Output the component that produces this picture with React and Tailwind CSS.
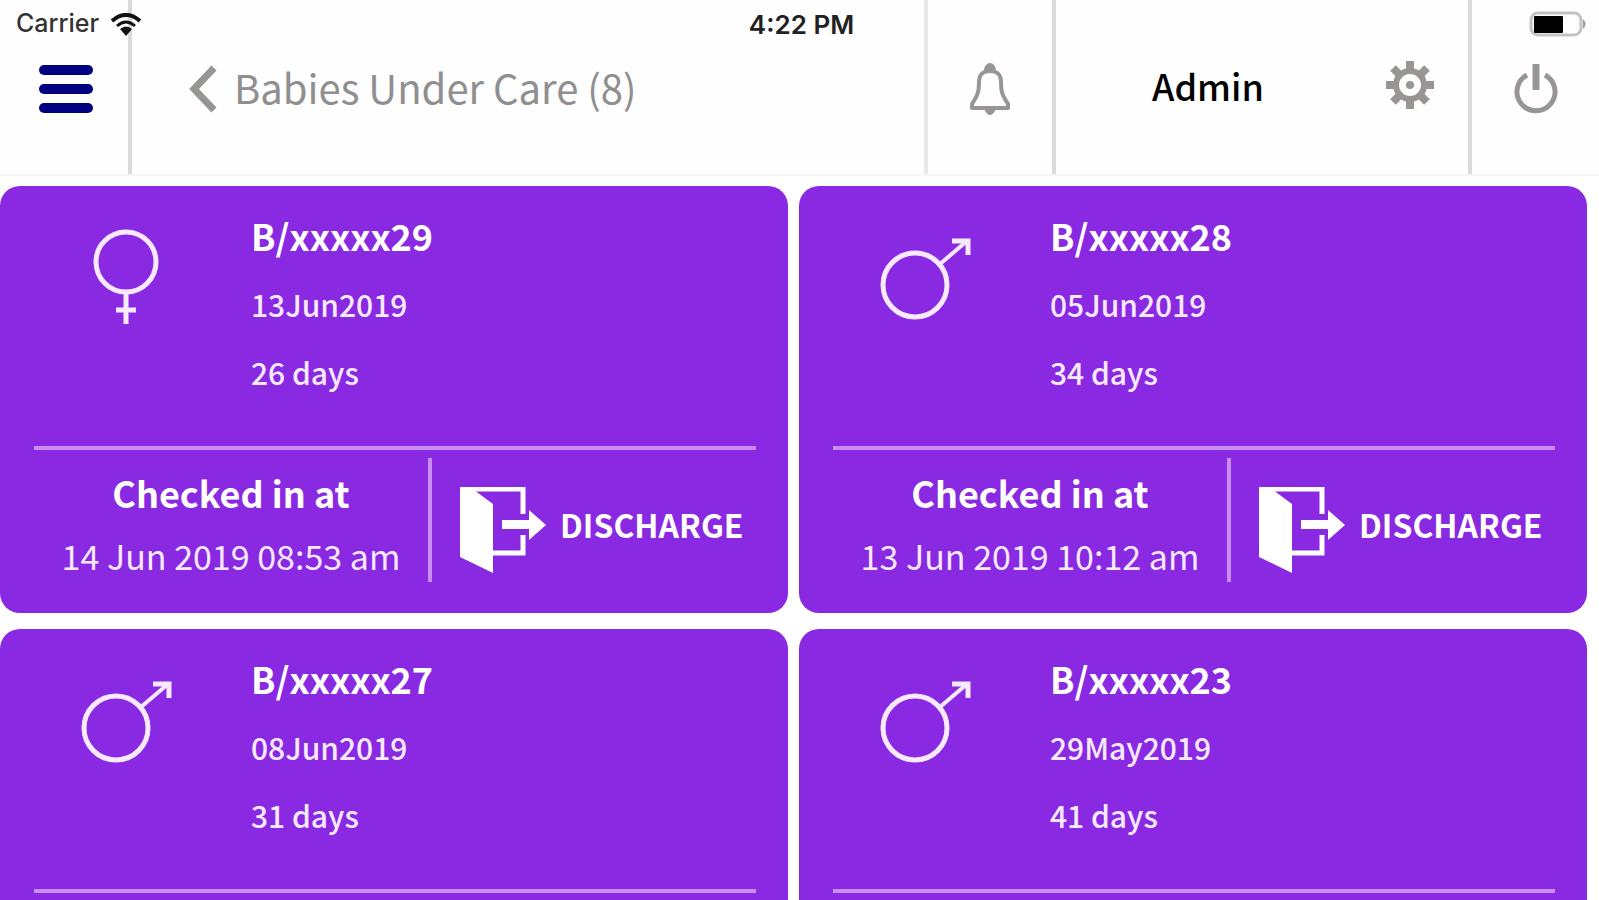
import React from 'react';

const babies = [
  { id: 'B/xxxxx29', sex: 'female', born: '13Jun2019', age: '26 days', checkedIn: '14 Jun 2019 08:53 am' },
  { id: 'B/xxxxx28', sex: 'male', born: '05Jun2019', age: '34 days', checkedIn: '13 Jun 2019 10:12 am' },
  { id: 'B/xxxxx27', sex: 'male', born: '08Jun2019', age: '31 days' },
  { id: 'B/xxxxx23', sex: 'male', born: '29May2019', age: '41 days' },
];

const FemaleIcon = () => (
  <svg viewBox="0 0 96 104" className="w-24 h-[104px]" fill="none" stroke="#f7e9ff" strokeWidth="5" aria-label="Female">
    <circle cx="48" cy="36" r="30" />
    <path d="M48 66v32M38 84h20" />
  </svg>
);

const MaleIcon = () => (
  <svg viewBox="0 0 96 104" className="w-24 h-[104px]" fill="none" stroke="#f7e9ff" strokeWidth="5" aria-label="Male">
    <circle cx="38" cy="59" r="32" />
    <path d="M63 38L90 15" strokeWidth="4" />
    <path d="M75 15h16v14" />
  </svg>
);

const DoorIcon = () => (
  <svg viewBox="0 0 86 86" className="w-[86px] h-[86px] shrink-0" fill="#fff" aria-hidden="true">
    <path d="M0 0H10L33 17V86L0 70Z" />
    <path d="M2 2H63V27M63 48V66H33" fill="none" stroke="#fff" strokeWidth="5" />
    <path d="M42 33H69V23L86 38L69 53V42H42Z" />
  </svg>
);

const WifiIcon = () => (
  <svg viewBox="0 0 30 23" className="w-[30px] h-[23px]" fill="none" stroke="#111" strokeWidth="4" aria-hidden="true">
    <path d="M1 8Q15 -4 29 8" />
    <path d="M6 13Q15 5 24 13" strokeWidth="3" />
    <path d="M9 16Q15 11 21 16L15 23Z" fill="#111" stroke="none" />
  </svg>
);

const BatteryIcon = () => (
  <svg viewBox="0 0 58 26" className="w-[58px] h-[26px]" aria-hidden="true">
    <rect x="2" y="2" width="50" height="22" rx="7" fill="#fff" stroke="#c4c4c4" strokeWidth="3" />
    <path d="M54 8q5 5 0 10z" fill="#999" />
    <rect x="5" y="5" width="29" height="17" rx="1" fill="#000" />
  </svg>
);

const BellIcon = () => (
  <svg viewBox="0 0 42 54" className="w-[42px] h-[54px]" fill="none" stroke="#999595" strokeWidth="4" strokeLinejoin="round" aria-hidden="true">
    <path d="M21 9C12 9 10 14 10 21C10 31 8 34 3 42V46H39V42C34 34 32 31 32 21C32 14 30 9 21 9Z" />
    <path d="M15 9a6 8 0 0 1 12 0zM15 47q6 12 12 0z" fill="#999595" stroke="none" />
  </svg>
);

const GearIcon = () => (
  <svg viewBox="-24 -24 48 48" className="w-12 h-12" fill="none" stroke="#999595" aria-hidden="true">
    <circle r="14" strokeWidth="6" />
    <path d="M0 -24V-16M0 24V16M-24 0H-16M24 0H16M-17 -17L-11 -11M17 17L11 11M-17 17L-11 11M17 -17L11 -11" strokeWidth="8" />
    <circle r="4" fill="#999595" stroke="none" />
  </svg>
);

const PowerIcon = () => (
  <svg viewBox="0 0 44 52" className="w-11 h-[52px]" fill="none" stroke="#999595" aria-hidden="true">
    <path d="M13 12A19 19 0 1 0 31 12" strokeWidth="5" />
    <path d="M22 1V27" strokeWidth="7" />
  </svg>
);

const BabyCard = ({ baby }) => (
  <article className="bg-[#8929e1] rounded-[20px] text-[#f7e9ff]">
    <div className="flex h-[260px]">
      <div className="w-[251px] shrink-0 flex justify-center pt-10">
        {baby.sex === 'female' ? <FemaleIcon /> : <MaleIcon />}
      </div>
      <div className="pt-[14px]">
        <h2 className="text-[36px] leading-[70px] font-bold text-white">{baby.id}</h2>
        <p className="text-[30px] leading-[68px] font-medium">{baby.born}</p>
        <p className="text-[30px] leading-[68px] font-medium">{baby.age}</p>
      </div>
    </div>
    <div className="ml-[34px] mr-8 border-t-4 border-[#c78df2] h-[167px] flex">
      {baby.checkedIn && (
        <>
          <div className="flex-1 pt-[10px] text-center">
            <h3 className="text-[36px] leading-[64px] font-bold text-white">Checked in at</h3>
            <p className="text-[34px] leading-[64px]">{baby.checkedIn}</p>
          </div>
          <div className="w-1 h-[124px] mt-2 bg-[#c78df2]" />
          <button className="w-[324px] h-[148px] pl-7 flex items-center gap-[14px] text-[32px] font-bold text-white">
            <span className="pt-3">
              <DoorIcon />
            </span>
            DISCHARGE
          </button>
        </>
      )}
    </div>
  </article>
);

const App = () => {
  return (
    <div className="h-screen overflow-hidden bg-white font-['Noto_Sans_CJK_JP','Noto_Sans',sans-serif]">
      {/* Device status bar, drawn over the header */}
      <div className="absolute inset-x-0 top-0 h-12 grid grid-cols-3 items-center pl-4 pr-3 font-['Inter',sans-serif] text-[26px] text-[#333] pointer-events-none">
        <div className="flex items-center gap-3 text-[25px] font-medium">
          Carrier
          <WifiIcon />
        </div>
        <div className="text-center font-semibold text-[#222]">4:22 PM</div>
        <div className="flex justify-end">
          <BatteryIcon />
        </div>
      </div>

      {/* Header */}
      <header className="h-44 flex items-stretch bg-[#fefefe] border-b-2 border-[#f5f5f5]">
        <button aria-label="Menu" className="w-[132px] pt-1 pl-1 border-r-4 border-[#dadada] flex flex-col items-center justify-center gap-[9px]">
          <span className="w-[54px] h-[10px] rounded-full bg-[#000080]" />
          <span className="w-[54px] h-[10px] rounded-full bg-[#000080]" />
          <span className="w-[54px] h-[10px] rounded-full bg-[#000080]" />
        </button>
        <div className="flex-1 flex items-center pt-1 pl-14 gap-4">
          <button aria-label="Back">
            <svg viewBox="0 0 30 48" className="w-[30px] h-12" fill="none" stroke="#999595" strokeWidth="7">
              <path d="M26 3L6 24L26 45" />
            </svg>
          </button>
          <h1 className="text-[40px] leading-[60px] pb-1 text-[#8f8f8f]">Babies Under Care (8)</h1>
        </div>
        <button aria-label="Notifications" className="w-[128px] pt-1 border-l-4 border-[#e8e8e8] flex items-center justify-center">
          <BellIcon />
        </button>
        <div className="w-[420px] pb-1 border-x-4 border-[#dadada] flex items-center justify-between pl-24 pr-[34px]">
          <span className="text-[36px] leading-[60px] font-medium text-black">Admin</span>
          <button aria-label="Settings">
            <GearIcon />
          </button>
        </div>
        <button aria-label="Log out" className="w-[127px] pt-1 flex items-center justify-center">
          <PowerIcon />
        </button>
      </header>

      {/* Baby cards */}
      <main className="grid grid-cols-2 gap-x-[11px] gap-y-4 pt-[10px] pr-3">
        {babies.map((baby) => (
          <BabyCard key={baby.id} baby={baby} />
        ))}
      </main>
    </div>
  );
};

export default App;
